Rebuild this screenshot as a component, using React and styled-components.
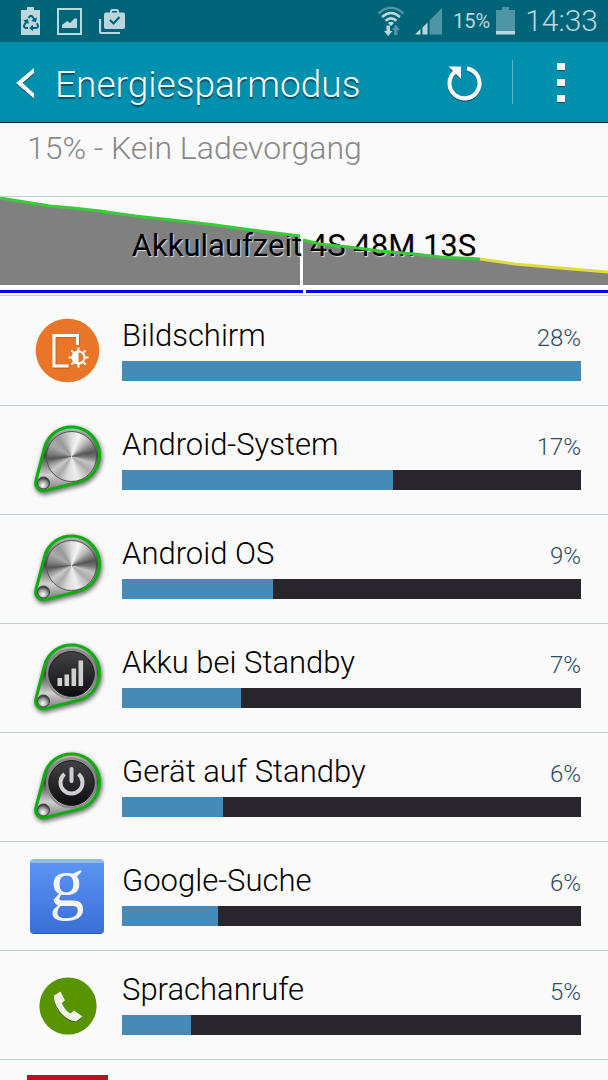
import React from "react";
import styled, { createGlobalStyle } from "styled-components";
import { FaRecycle } from "react-icons/fa";

const GlobalStyle = createGlobalStyle`
  *, *::before, *::after { box-sizing: border-box; }
  body {
    margin: 0;
    background: #fafafa;
    color: #000;
    font-family: Roboto, "Liberation Sans", sans-serif;
    font-weight: 300;
  }
`;

const Screen = styled.div`
  display: flex;
  flex-direction: column;
  height: 100vh;
  overflow: hidden;
`;

const StatusBar = styled.div`
  display: flex;
  align-items: center;
  justify-content: space-between;
  flex: none;
  height: 42px;
  padding: 0 10px 0 20px;
  background: #006479;
  color: #bbd7dd;
`;

const StatusGroup = styled.div`
  display: flex;
  align-items: center;
  gap: ${(p) => p.$gap}px;
  svg { display: block; flex: none; }
`;

const BatteryText = styled.span`
  font-size: 20px;
  line-height: 24px;
  font-weight: 400;
`;

const Clock = styled.time`
  font-size: 30px;
  line-height: 40px;
  padding-left: 4px;
`;

const Header = styled.header`
  display: flex;
  align-items: center;
  flex: none;
  height: 81px;
  background: #0090ae;
  border-bottom: 1px solid #00274a;
  box-shadow: inset 0 -2px 0 #0a86a2;
  svg { display: block; filter: drop-shadow(0 1px 0 #00506a); }
`;

const HeaderButton = styled.button`
  display: flex;
  align-items: center;
  justify-content: center;
  width: ${(p) => p.$width}px;
  height: 80px;
  padding: 2px 0 0;
  border: 0;
  background: none;
  color: #fafafa;
`;

const Title = styled.h1`
  flex: 1;
  margin: 0;
  padding: 5px 0 0 3px;
  color: #fafafa;
  font-size: 37px;
  line-height: 48px;
  font-weight: 300;
  text-shadow: 0 2px 1px #00506a;
`;

const Divider = styled.span`
  width: 1px;
  height: 44px;
  background: #5cb4c8;
`;

const Summary = styled.p`
  flex: none;
  margin: 0;
  padding: 5px 27px 28px;
  border-bottom: 1px solid #c3ccd2;
  color: #888;
  font-size: 32px;
  line-height: 40px;
`;

const Chart = styled.section`
  display: grid;
  flex: none;
  height: 99px;
  border-bottom: 1px solid #c3ccd2;
  > * { grid-area: 1 / 1; }
`;

const ChartLayer = styled.svg`
  display: block;
  width: 100%;
  height: 98px;
`;

const ChartLabel = styled.h2`
  justify-self: center;
  align-self: center;
  margin: 0;
  font-size: 31px;
  line-height: 40px;
  font-weight: 400;
  text-shadow: 1px 1px 1px #ddd;
`;

const AppList = styled.ul`
  flex: 1;
  min-height: 0;
  margin: 0;
  padding: 0;
  overflow: hidden;
  list-style: none;
`;

const AppRow = styled.li`
  display: grid;
  grid-template-columns: 80px 1fr;
  column-gap: 14px;
  align-items: center;
  height: 109px;
  padding: 0 27px 0 28px;
  border-bottom: 1px solid #c3ccd2;

  &:first-child { height: 110px; }
`;

const IconBox = styled.div`
  position: relative;
  width: 80px;
  height: 80px;
  svg { display: block; overflow: visible; }
`;

const Disc = styled.span`
  position: absolute;
  left: 18px;
  top: 11px;
  width: 51px;
  height: 51px;
  border: 1px solid #555;
  border-radius: 50%;
  background: conic-gradient(
    #ddd 0deg, #f4f4f4 20deg, #bbb 45deg, #555 78deg, #777 92deg, #c5c5c5 108deg,
    #aaa 130deg, #eee 165deg, #ddd 190deg, #aaa 215deg, #ccc 235deg, #999 250deg,
    #555 264deg, #777 275deg, #aaa 300deg, #999 325deg, #ddd 360deg
  );
`;

const Usage = styled.div`
  display: flex;
  flex-direction: column;
  gap: 5px;
  padding-bottom: 5px;
`;

const UsageHead = styled.div`
  display: flex;
  align-items: baseline;
  justify-content: space-between;
`;

const AppName = styled.span`
  font-size: 31px;
  line-height: 40px;
`;

const Percent = styled.span`
  color: #2f4a66;
  font-size: 24px;
  line-height: 32px;
`;

const Track = styled.div`
  height: 20px;
  background: #28252c;
`;

const Fill = styled.div`
  height: 100%;
  background: #468bb7;
`;

const LINE_LEFT = "0,1 25,5 50,9 73,11 100,14 135,19 190,25 215,28 260,34 292,38 300,39";
const LINE_GREEN = "303,43 320,47 349,50 380,54 414,57 440,60 480,62";
const LINE_YELLOW = "480,62 515,67 560,71 608,75";

function SaverIcon() {
  return (
    <svg width="20" height="28" viewBox="0 0 20 28" aria-hidden="true">
      <path d="M7 0h7v3h6v25H1V3h6z" fill="currentColor" />
      <FaRecycle x="3" y="8" width="15" height="14" color="#006479" />
    </svg>
  );
}

function ImageIcon() {
  return (
    <svg width="25" height="27" viewBox="0 0 25 27" aria-hidden="true">
      <path d="M1 1h23v25H1z" fill="none" stroke="currentColor" strokeWidth="2" />
      <path d="M5 20v-3l5-4 3 2 5-5 1 1 1-1v10z" fill="currentColor" />
    </svg>
  );
}

function CaseIcon() {
  return (
    <svg width="26" height="25" viewBox="0 0 26 25" aria-hidden="true">
      <path d="M1 10v12.500q0 1.500 1.500 1.500H21" fill="none" stroke="currentColor" strokeWidth="2.200" />
      <path d="M12 4V2.500q0-1.500 1.500-1.500h4q1.500 0 1.500 1.500V4" fill="none" stroke="currentColor" strokeWidth="2" />
      <rect x="5" y="3.500" width="21" height="16.500" rx="2" fill="currentColor" />
      <path d="m11 11 3.500 3.500 6-6.500" fill="none" stroke="#006479" strokeWidth="2.200" />
    </svg>
  );
}

function WifiIcon() {
  return (
    <svg width="28" height="30" viewBox="0 0 28 30" aria-hidden="true">
      <g fill="none" strokeWidth="2.600">
        <path d="M1.500 7.500q12.500-11.500 25 0" stroke="#4f95a3" />
        <path d="M5 11q9-8 18 0M8.500 14.800q5.500-5 11 0" stroke="currentColor" />
      </g>
      <path d="m11 17q3-2.500 6 0l-3 3z" fill="currentColor" />
      <path d="M9.500 19.500h3.500V25h2.500l-4.300 5L7 25h2.500z" fill="currentColor" />
      <path d="M17 29v-5h-2l3.800-5.500 4.200 5.500h-2.500v5z" fill="#4f95a3" />
    </svg>
  );
}

function SignalIcon() {
  return (
    <svg width="28" height="28" viewBox="0 0 28 28" aria-hidden="true">
      <path d="M0 27.500 5.500 22v5.500zM7.500 20.500l5-5v12h-5z" fill="currentColor" />
      <path d="M14.500 13.500 27 1v26.500H14.500z" fill="#4f95a3" />
    </svg>
  );
}

function BatteryIcon() {
  return (
    <svg width="19" height="28" viewBox="0 0 19 28" aria-hidden="true">
      <path d="M6 0h7v3h6v21H0V3h6z" fill="#4f95a3" />
      <path d="M0 24h19v3.500H0z" fill="currentColor" />
    </svg>
  );
}

function ScreenIcon() {
  return (
    <svg width="80" height="80" viewBox="0 0 80 80" aria-hidden="true">
      <circle cx="39.500" cy="39.500" r="31.800" fill="#e97528" />
      <path d="M41 56.500H27v-31h23.500v9" fill="none" stroke="#a9531b" strokeOpacity=".5" strokeWidth="3" />
      <path d="M40.500 55H26V24.500h23.500V34" fill="none" stroke="#fff" strokeWidth="3" />
      <path d="M50.500 36.500v20M40.500 46.500h20M43.400 39.400l14.200 14.200M57.600 39.400 43.400 53.600" stroke="#fff" strokeWidth="2" />
      <circle cx="50.500" cy="46.500" r="6" fill="#e97528" stroke="#fff" strokeWidth="2" />
      <path d="M50.500 40v13a6.500 6.500 0 0 1 0-13z" fill="#fff" />
    </svg>
  );
}

const KNOB = "M16.400 28A28 28 0 1 1 50 62.200L17.300 70.600A7.800 7.800 0 0 1 7.900 61z";

function KnobIcon({ kind }) {
  const dark = kind !== "metal";
  return (
    <>
      <svg width="80" height="80" viewBox="0 0 80 80" aria-hidden="true">
        <defs>
          <linearGradient id={`${kind}-body`} x1="0" y1="0" x2="0" y2="1">
            <stop offset="0" stopColor="#bbb" />
            <stop offset=".2" stopColor="#888" />
            <stop offset=".45" stopColor="#444" />
            <stop offset=".75" stopColor="#d0d0d0" />
            <stop offset="1" stopColor="#777" />
          </linearGradient>
          <radialGradient id={`${kind}-ball`} cx=".45" cy=".7" r=".65">
            <stop offset="0" stopColor="#fff" />
            <stop offset=".6" stopColor="#999" />
            <stop offset="1" stopColor="#333" />
          </radialGradient>
          <linearGradient id={`${kind}-face`} x1="0" y1="0" x2="0" y2="1">
            <stop offset="0" stopColor="#424244" />
            <stop offset=".5" stopColor="#29292b" />
            <stop offset="1" stopColor="#0c0c0e" />
          </linearGradient>
          <filter id={`${kind}-blur`} x="-20%" y="-20%" width="140%" height="140%">
            <feGaussianBlur stdDeviation="2" />
          </filter>
        </defs>
        <path d={KNOB} transform="translate(1 2)" fill="#444" stroke="#444" strokeWidth="4" opacity=".75" filter={`url(#${kind}-blur)`} />
        <path d={KNOB} fill={`url(#${kind}-body)`} stroke="#0cae0c" strokeWidth="3" />
        <circle cx="15.500" cy="63" r="6" fill={`url(#${kind}-ball)`} stroke="#444" />
        {dark && (
          <>
            <circle cx="43.500" cy="36" r="24.500" fill="none" stroke="#888" strokeWidth="2" />
            <circle cx="43.500" cy="36" r="22.500" fill={`url(#${kind}-face)`} stroke="#1a1a1a" />
          </>
        )}
        {kind === "signal" && (
          <path d="M29.500 40h4.600v8h-4.600zM36.500 36.500h4.600V48h-4.600zM43.500 30.500h4.600V48h-4.600zM50.500 22.500h4.600V48h-4.600z" fill="#d0d0d0" />
        )}
        {kind === "power" && (
          <g fill="none" stroke="#d0d0d0" strokeWidth="4">
            <path d="M36.500 27a11 11 0 1 0 14 0" />
            <path d="M43.500 22v12" strokeLinecap="round" />
          </g>
        )}
      </svg>
      {!dark && <Disc />}
    </>
  );
}

function GoogleIcon() {
  return (
    <svg width="80" height="80" viewBox="0 0 80 80" aria-hidden="true">
      <defs>
        <linearGradient id="google-blue" x1="0" y1="0" x2="0" y2="1">
          <stop offset="0" stopColor="#5b94f2" />
          <stop offset="1" stopColor="#3a6fd6" />
        </linearGradient>
      </defs>
      <rect x="2" y="4" width="74" height="74" rx="4" fill="#2f5db5" />
      <rect x="2" y="3" width="74" height="74" rx="4" fill="#8fb8f5" />
      <path d="M2 7h74v66q0 4-4 4H6q-4 0-4-4z" fill="url(#google-blue)" />
      <text x="39" y="50" textAnchor="middle" fill="#f4f4f4" fontFamily="Liberation Serif, serif" fontSize="70" fontWeight="400">g</text>
    </svg>
  );
}

function CallIcon() {
  return (
    <svg width="80" height="80" viewBox="0 0 80 80" aria-hidden="true">
      <circle cx="40" cy="41" r="28.600" fill="#589400" />
      <path
        d="M32.500 26.500 26 30.500c-.5 5 2 11.500 7 17.500 4.500 5 9.500 7.800 15 8.500l6.500-5-8.500-6-3.500 3c-3.500-1.500-7.500-7-8.500-10.500l3-2.500z"
        fill="#eef5e4"
        style={{ filter: "drop-shadow(0 1px 0 #34600a)" }}
      />
    </svg>
  );
}

function RedIcon() {
  return (
    <svg width="80" height="80" viewBox="0 0 80 80" aria-hidden="true">
      <rect x="-1" y="1" width="81" height="80" fill="#c00d23" />
    </svg>
  );
}

const APPS = [
  { name: "Bildschirm", percent: "28%", fill: 100, icon: <ScreenIcon /> },
  { name: "Android-System", percent: "17%", fill: 59, icon: <KnobIcon kind="metal" /> },
  { name: "Android OS", percent: "9%", fill: 33, icon: <KnobIcon kind="metal" /> },
  { name: "Akku bei Standby", percent: "7%", fill: 26, icon: <KnobIcon kind="signal" /> },
  { name: "Gerät auf Standby", percent: "6%", fill: 22, icon: <KnobIcon kind="power" /> },
  { name: "Google-Suche", percent: "6%", fill: 21, icon: <GoogleIcon /> },
  { name: "Sprachanrufe", percent: "5%", fill: 15, icon: <CallIcon /> },
];

export default function App() {
  return (
    <>
      <GlobalStyle />
      <Screen>
        <StatusBar>
          <StatusGroup $gap={17}>
            <SaverIcon />
            <ImageIcon />
            <CaseIcon />
          </StatusGroup>
          <StatusGroup $gap={10}>
            <WifiIcon />
            <SignalIcon />
            <StatusGroup $gap={6}>
              <BatteryText>15%</BatteryText>
              <BatteryIcon />
              <Clock>14:33</Clock>
            </StatusGroup>
          </StatusGroup>
        </StatusBar>

        <Header>
          <HeaderButton type="button" aria-label="Zurück" $width={52}>
            <svg width="20" height="32" viewBox="0 0 20 32">
              <path d="M18 1v5L6.500 16 18 26.500v5L0 16z" fill="currentColor" />
            </svg>
          </HeaderButton>
          <Title>Energiesparmodus</Title>
          <HeaderButton type="button" aria-label="Aktualisieren" $width={96}>
            <svg width="36" height="36" viewBox="0 0 36 36">
              <path d="M21 3.600A15 15 0 1 1 9 6.800" fill="none" stroke="currentColor" strokeWidth="4.200" />
              <path d="M2.500 1.500H15v12.500l-4-4-4-4z" fill="currentColor" />
            </svg>
          </HeaderButton>
          <Divider />
          <HeaderButton type="button" aria-label="Weitere Optionen" $width={95}>
            <svg width="8" height="40" viewBox="0 0 8 40">
              <path d="M0 0h8v7H0zM0 16h8v7H0zM0 32h8v7H0z" fill="currentColor" />
            </svg>
          </HeaderButton>
        </Header>

        <Summary>15% - Kein Ladevorgang</Summary>

        <Chart>
          <ChartLayer viewBox="0 0 608 98" preserveAspectRatio="none" aria-hidden="true">
            <path d="M0 88h608v10H0z" fill="#fff" />
            <polygon points={`${LINE_LEFT} 300,88 0,88`} fill="#808080" />
            <path d="M300 42h3v46h-3z" fill="#fff" />
            <polygon points={`${LINE_GREEN} ${LINE_YELLOW} 608,88 303,88`} fill="#808080" />
          </ChartLayer>
          <ChartLabel>Akkulaufzeit 4S 48M 13S</ChartLabel>
          <ChartLayer viewBox="0 0 608 98" preserveAspectRatio="none" aria-hidden="true">
            <g fill="none" strokeWidth="3">
              <polyline points={LINE_LEFT} stroke="#38cc38" />
              <polyline points={LINE_GREEN} stroke="#38cc38" />
              <polyline points={LINE_YELLOW} stroke="#e0dc40" />
            </g>
            <path d="M0 93h303v3H0zM306 93h302v3H306z" fill="#0000ff" />
          </ChartLayer>
        </Chart>

        <AppList>
          {APPS.map((app) => (
            <AppRow key={app.name}>
              <IconBox>{app.icon}</IconBox>
              <Usage>
                <UsageHead>
                  <AppName>{app.name}</AppName>
                  <Percent>{app.percent}</Percent>
                </UsageHead>
                <Track>
                  <Fill style={{ width: `${app.fill}%` }} />
                </Track>
              </Usage>
            </AppRow>
          ))}
          <AppRow>
            <IconBox>
              <RedIcon />
            </IconBox>
          </AppRow>
        </AppList>
      </Screen>
    </>
  );
}
